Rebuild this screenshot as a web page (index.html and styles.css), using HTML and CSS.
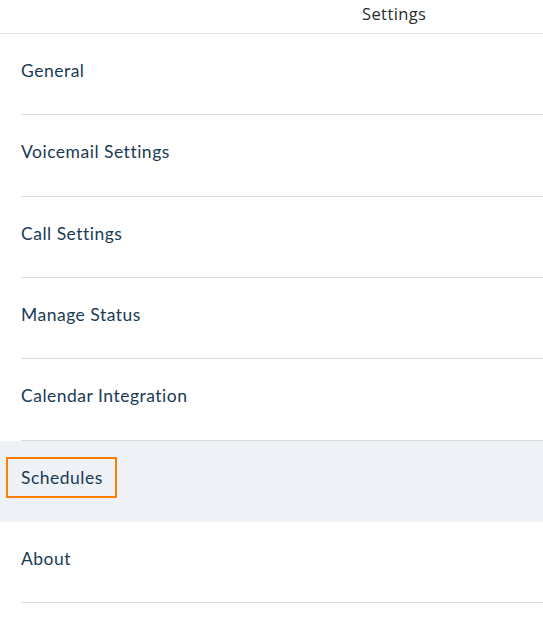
FILE: index.html
```html
<!DOCTYPE html>
<html>
<head>
<meta charset="utf-8">
<link rel="stylesheet" href="styles.css">
</head>
<body>
<div class="page">
  <header class="header"><span class="title">Settings</span></header>
  <ul class="menu">
    <li class="item"><span class="label">General</span></li>
    <li class="item"><span class="label">Voicemail Settings</span></li>
    <li class="item"><span class="label">Call Settings</span></li>
    <li class="item"><span class="label">Manage Status</span></li>
    <li class="item"><span class="label">Calendar Integration</span></li>
    <li class="item selected"><span class="label focused">Schedules</span></li>
    <li class="item"><span class="label">About</span></li>
  </ul>
</div>
</body>
</html>
```
FILE: styles.css
```css
html, body {
  margin: 0;
  padding: 0;
  background: #ffffff;
}
.page {
  width: 543px;
  font-family: Lato, "Open Sans", sans-serif;
}
.header {
  height: 33px;
  border-bottom: 1px solid #e6e6e6;
  display: flex;
  align-items: flex-start;
  padding-left: 362px;
  box-sizing: content-box;
}
.title {
  font-family: "Open Sans", sans-serif;
  font-size: 16.5px;
  letter-spacing: 0.4px;
  color: #2b2b2b;
  line-height: 28px;
}
.menu {
  list-style: none;
  margin: 0;
  padding: 0;
}
.item {
  height: 81.33px;
  box-sizing: border-box;
  display: flex;
  align-items: center;
  padding-left: 21px;
  padding-bottom: 7px;
  position: relative;
}
.item::after {
  content: "";
  position: absolute;
  left: 21px;
  right: 0;
  bottom: 0;
  height: 1px;
  background: #dddddd;
}
.item.selected {
  background: #eef1f6;
}
.item.selected::after {
  display: none;
}
.label {
  font-size: 17.5px;
  letter-spacing: 0.5px;
  color: #1a3a54;
  line-height: 22px;
}
.focused {
  margin-left: -15px;
  padding: 8px 12px 7px 13px;
  border: 2px solid #ff8000;
}
```
